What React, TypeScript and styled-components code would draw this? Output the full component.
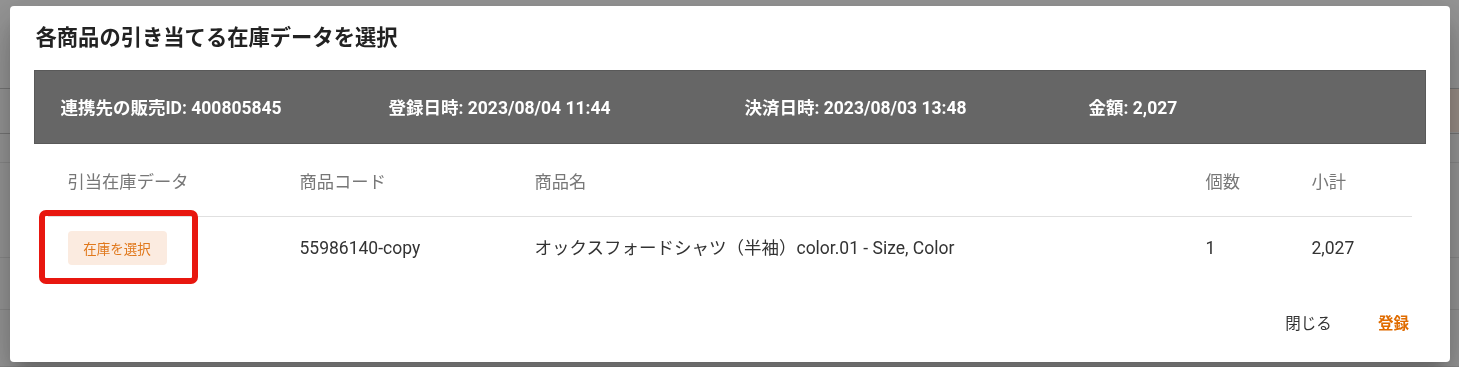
import React from 'react'
import styled, { createGlobalStyle } from 'styled-components'

const GlobalStyle = createGlobalStyle`
  html, body {
    margin: 0;
    padding: 0;
    height: 100%;
  }
  body {
    font-family: Roboto, "Noto Sans CJK JP", sans-serif;
    background: #ffffff;
    overflow: hidden;
  }
`

const info = [
  { label: '連携先の販売ID', value: '400805845' },
  { label: '登録日時', value: '2023/08/04 11:44' },
  { label: '決済日時', value: '2023/08/03 13:48' },
  { label: '金額', value: '2,027' },
]

const columns = ['引当在庫データ', '商品コード', '商品名', '個数', '小計']

const item = {
  code: '55986140-copy',
  name: 'オックスフォードシャツ（半袖）color.01 - Size, Color',
  qty: '1',
  subtotal: '2,027',
}

const App: React.FC = () => {
  return (
    <>
      <GlobalStyle />
      <BehindPage>
        <BehindSpacer />
        <BehindHeader>
          <BehindAction />
        </BehindHeader>
        <BehindRow height={30} />
        <BehindRow height={100} />
        <BehindRow height={54} />
        <BehindRow height={60} />
      </BehindPage>

      <Backdrop>
        <Dialog>
          <DialogTitle>各商品の引き当てる在庫データを選択</DialogTitle>
          <DialogContent>
            <InfoBar>
              {info.map((i) => (
                <InfoItem key={i.label}>
                  {i.label}: {i.value}
                </InfoItem>
              ))}
            </InfoBar>

            <Table>
              <HeadRow>
                {columns.map((c) => (
                  <HeadCell key={c}>{c}</HeadCell>
                ))}
              </HeadRow>
              <BodyRow>
                <BodyCell>
                  <Marked>
                    <SelectButton>在庫を選択</SelectButton>
                    <Highlight />
                  </Marked>
                </BodyCell>
                <BodyCell>{item.code}</BodyCell>
                <BodyCell>{item.name}</BodyCell>
                <BodyCell>{item.qty}</BodyCell>
                <BodyCell>{item.subtotal}</BodyCell>
              </BodyRow>
            </Table>
          </DialogContent>

          <DialogActions>
            <TextButton>閉じる</TextButton>
            <TextButton primary>登録</TextButton>
          </DialogActions>
        </Dialog>
      </Backdrop>
    </>
  )
}

/* page that sits under the backdrop */

const BehindPage = styled.div`
  display: flex;
  flex-direction: column;
  height: 100vh;
  background: #f9f9f9;
`

const BehindSpacer = styled.div`
  height: 92px;
`

const BehindHeader = styled.div`
  display: flex;
  justify-content: flex-end;
  height: 46px;
  border-top: 1px solid #c4c4c4;
  border-bottom: 1px solid #c4c4c4;
`

const BehindAction = styled.div`
  width: 80px;
  height: 43px;
  background: #ffece0;
`

const BehindRow = styled.div<{ height: number }>`
  height: ${(p) => p.height - 1}px;
  border-bottom: 1px solid #e3e3e3;
`

/* dialog */

const Backdrop = styled.div`
  position: fixed;
  inset: 0;
  display: flex;
  align-items: center;
  justify-content: center;
  background: rgba(0, 0, 0, 0.4);
`

const Dialog = styled.div`
  width: 1440px;
  display: flex;
  flex-direction: column;
  background: #ffffff;
  border-radius: 4px;
  box-shadow: 0px 11px 15px -7px rgba(0, 0, 0, 0.2),
    0px 24px 38px 3px rgba(0, 0, 0, 0.14), 0px 9px 46px 8px rgba(0, 0, 0, 0.12);
`

const DialogTitle = styled.h2`
  margin: 0;
  padding: 18px 26px 18px;
  font-size: 21.3px;
  line-height: 28px;
  font-weight: 700;
  color: #222222;
`

const DialogContent = styled.div`
  padding: 0 24px;
`

const InfoBar = styled.div`
  display: grid;
  grid-template-columns: 328px 356px 344px 1fr;
  align-items: center;
  height: 74px;
  box-sizing: border-box;
  padding: 0 26px;
  background: #666666;
  border: 1px solid #595959;
`

const InfoItem = styled.div`
  font-size: 17.5px;
  font-weight: 700;
  color: #ffffff;
  white-space: nowrap;
`

const Table = styled.div`
  margin: 0 14px;
`

const rowGrid = `
  display: grid;
  grid-template-columns: 232px 235px 671px 106px 1fr;
  padding-left: 20px;
`

const HeadRow = styled.div`
  ${rowGrid}
  padding-top: 26px;
  padding-bottom: 22px;
  border-bottom: 1px solid #e0e0e0;
`

const HeadCell = styled.div`
  font-size: 17.3px;
  line-height: 24px;
  color: #777777;
`

const BodyRow = styled.div`
  ${rowGrid}
  align-items: center;
  padding: 14px 0 14px 20px;
`

const BodyCell = styled.div`
  font-size: 17.5px;
  line-height: 24px;
  color: #333333;
  white-space: nowrap;
`

const Marked = styled.div`
  position: relative;
  display: inline-flex;
`

const SelectButton = styled.button`
  width: 99px;
  height: 34px;
  padding: 0;
  border: none;
  border-radius: 4px;
  background: #fbebe0;
  color: #e0781c;
  font-family: inherit;
  font-size: 13.5px;
  cursor: pointer;
`

/* annotation drawn over the button */
const Highlight = styled.div`
  position: absolute;
  left: -29px;
  right: -31px;
  top: -21px;
  bottom: -19px;
  border: 6px solid #e8170f;
  border-radius: 7px;
  pointer-events: none;
`

const DialogActions = styled.div`
  display: flex;
  justify-content: flex-end;
  gap: 21px;
  padding: 25px 24px 22px;
`

const TextButton = styled.button<{ primary?: boolean }>`
  min-width: 64px;
  height: 36px;
  padding: 6px 8px;
  border: none;
  background: none;
  font-family: inherit;
  font-size: 15.5px;
  font-weight: ${(p) => (p.primary ? 700 : 400)};
  color: ${(p) => (p.primary ? '#e06c00' : '#333333')};
  cursor: pointer;
`

export default App
